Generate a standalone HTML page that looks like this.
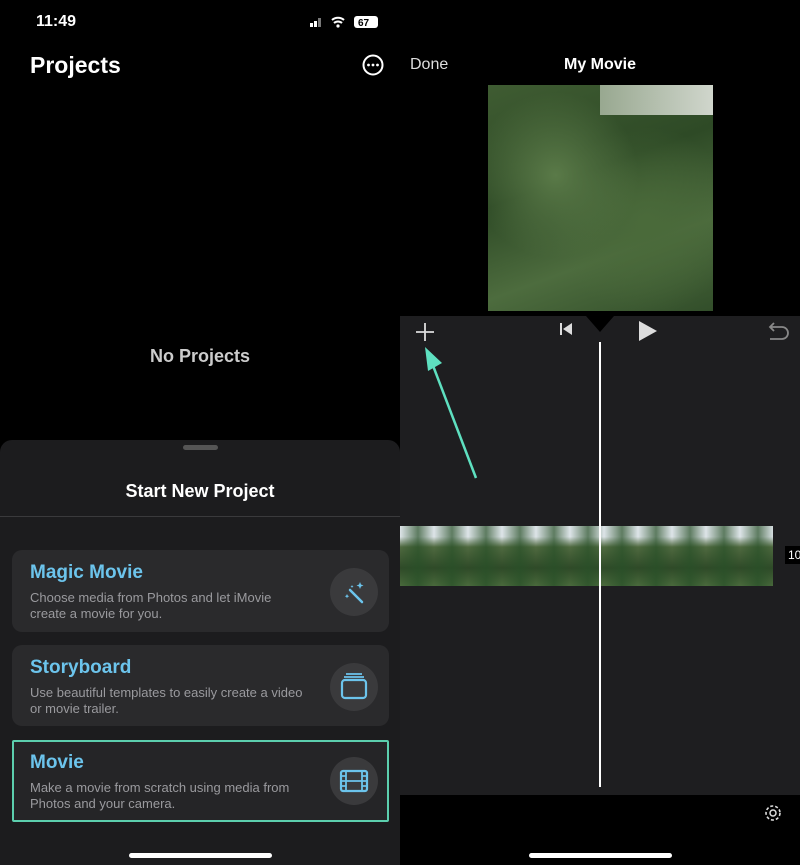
<!DOCTYPE html>
<html><head><style>
*{margin:0;padding:0;box-sizing:border-box}
body{width:800px;height:865px;background:#000;font-family:"Liberation Sans",sans-serif;position:relative;overflow:hidden;color:#fff}
.a{position:absolute}
.card{position:absolute;left:12px;width:377px;background:#2a2a2c;border-radius:10px}
.card h3{position:absolute;left:18px;top:12px;font-size:19px;color:#6cc4ec;font-weight:bold}
.card p{position:absolute;left:18px;top:40px;font-size:13px;line-height:16px;color:#9a9a9e;width:300px}
.ic{position:absolute;right:11px;top:18px;width:48px;height:48px;border-radius:50%;background:#3a3a3c}
</style></head><body>
<div class="a" style="left:36px;top:13px;font-size:16px;font-weight:bold">11:49</div>
<div class="a" style="left:308px;top:14px;font-size:12px">
<svg width="80" height="16"><rect x="2" y="9" width="3" height="4" fill="#fff"/><rect x="6" y="7" width="3" height="6" fill="#fff"/><rect x="10" y="4" width="3" height="9" fill="#777"/><path d="M24 6a9 9 0 0 1 12 0M26 9a6 6 0 0 1 8 0" stroke="#fff" stroke-width="2" fill="none"/><circle cx="30" cy="12" r="1.6" fill="#fff"/><rect x="46" y="2" width="24" height="12" rx="3" fill="#fff"/><text x="50" y="12" font-size="10" font-weight="bold" fill="#000" font-family="Liberation Sans">67</text></svg></div>
<div class="a" style="left:30px;top:52px;font-size:23px;font-weight:bold">Projects</div>
<svg class="a" style="left:362px;top:54px" width="22" height="22"><circle cx="11" cy="11" r="9.5" stroke="#fff" stroke-width="2" fill="none"/><circle cx="6.5" cy="11" r="1.4" fill="#fff"/><circle cx="11" cy="11" r="1.4" fill="#fff"/><circle cx="15.5" cy="11" r="1.4" fill="#fff"/></svg>
<div class="a" style="left:0;width:400px;top:346px;text-align:center;font-size:18px;font-weight:bold;color:#ccc">No Projects</div>
<div class="a" style="left:0;top:440px;width:400px;height:425px;background:#1c1c1e;border-radius:12px 12px 0 0"></div>
<div class="a" style="left:183px;top:445px;width:35px;height:5px;border-radius:3px;background:#555"></div>
<div class="a" style="left:0;width:400px;top:481px;text-align:center;font-size:18px;font-weight:bold">Start New Project</div>
<div class="a" style="left:0;top:516px;width:400px;height:1px;background:#3a3a3c"></div>
<div class="card" style="top:550px;height:82px"><h3>Magic Movie</h3><p style="width:270px">Choose media from Photos and let iMovie create a movie for you.</p><div class="ic"><svg width="48" height="48"><path d="M20 22l12 12" stroke="#6cc4ec" stroke-width="2.5" stroke-linecap="round"/><path d="M30 14l1 2.5 2.5 1-2.5 1-1 2.5-1-2.5-2.5-1 2.5-1z M17 26l.7 1.5 1.5.7-1.5.7-.7 1.5-.7-1.5-1.5-.7 1.5-.7z M22 17l.5 1 1 .5-1 .5-.5 1-.5-1-1-.5 1-.5z" fill="#6cc4ec"/></svg></div></div>
<div class="card" style="top:645px;height:81px"><h3>Storyboard</h3><p style="width:285px">Use beautiful templates to easily create a video or movie trailer.</p><div class="ic"><svg width="48" height="48"><rect x="12" y="17" width="24" height="18" rx="3" stroke="#6cc4ec" stroke-width="2.2" fill="none"/><path d="M14 14h20M16 11h16" stroke="#6cc4ec" stroke-width="1.8"/></svg></div></div>
<div class="card" style="top:740px;height:82px;background:#252527;border:2px solid #5ccfae;border-radius:2px"><h3 style="top:10px;left:16px">Movie</h3><p style="top:38px;left:16px;width:290px">Make a movie from scratch using media from Photos and your camera.</p><div class="ic" style="top:15px;right:9px"><svg width="48" height="48"><rect x="11" y="14" width="26" height="20" rx="2" stroke="#6cc4ec" stroke-width="2.2" fill="none"/><path d="M16 14v20M32 14v20M11 19h5M11 24h5M11 29h5M32 19h5M32 24h5M32 29h5M16 24h16" stroke="#6cc4ec" stroke-width="1.8"/></svg></div></div>
<div class="a" style="left:129px;top:853px;width:143px;height:5px;border-radius:3px;background:#fff"></div>

<div class="a" style="left:400px;top:0;width:400px;height:865px;background:#000"></div>
<div class="a" style="left:410px;top:56px;font-size:16px;color:#ddd">Done</div>
<div class="a" style="left:400px;width:400px;top:56px;text-align:center;font-size:16px;font-weight:bold">My Movie</div>
<div class="a" style="left:488px;top:85px;width:225px;height:226px;background:radial-gradient(circle at 30% 40%,#5a7a48,transparent 40%),radial-gradient(circle at 70% 60%,#4a6a3a,transparent 45%),linear-gradient(160deg,#3f5c32,#2e4a26 40%,#4d6c3e 70%,#324e2a)"></div>
<div class="a" style="left:600px;top:85px;width:113px;height:30px;background:linear-gradient(90deg,#98a890,#d0d6cc)"></div>
<div class="a" style="left:400px;top:316px;width:400px;height:479px;background:#1e1e20"></div>
<svg class="a" style="left:586px;top:316px" width="28" height="18"><path d="M0 0h28L14 16z" fill="#000"/></svg>
<svg class="a" style="left:414px;top:321px" width="22" height="22"><path d="M11 2v18M2 11h18" stroke="#ddd" stroke-width="1.8"/></svg>
<svg class="a" style="left:558px;top:322px" width="16" height="14"><rect x="2" y="1" width="2" height="12" fill="#ddd"/><path d="M14 1v12L5 7z" fill="#ddd"/></svg>
<svg class="a" style="left:636px;top:320px" width="22" height="22"><path d="M3 1v20l18-10z" fill="#ddd"/></svg>
<svg class="a" style="left:766px;top:321px" width="24" height="20"><path d="M5 6h11a6 6 0 0 1 0 12H4M8 2L4 6l4 4" stroke="#888" stroke-width="1.8" fill="none"/></svg>
<svg class="a" style="left:420px;top:345px" width="60" height="135"><path d="M56 133L12 18" stroke="#5ee0c0" stroke-width="2.5"/><path d="M5 2l3 24 14-8z" fill="#5ee0c0"/></svg>
<div class="a" style="left:400px;top:526px;width:373px;height:60px;background:linear-gradient(180deg,#dde4e8 0%,#dde4e8 18%,#506a40 35%,#2f4a28 70%,#4a6a3c 100%)"></div>
<div class="a" style="left:400px;top:526px;width:373px;height:60px;background:repeating-linear-gradient(90deg,rgba(60,90,50,.0) 0,rgba(40,80,40,.7) 18px,rgba(60,90,50,0) 34px)"></div>
<div class="a" style="left:785px;top:546px;font-size:12px;background:#000;padding:2px 3px">10</div>
<div class="a" style="left:599px;top:342px;width:2px;height:445px;background:#fff"></div>
<svg class="a" style="left:762px;top:802px" width="22" height="22"><circle cx="11" cy="11" r="7" stroke="#ddd" stroke-width="1.6" fill="none" stroke-dasharray="3 2"/><circle cx="11" cy="11" r="3" stroke="#ddd" stroke-width="1.5" fill="none"/></svg>
<div class="a" style="left:529px;top:853px;width:143px;height:5px;border-radius:3px;background:#fff"></div>
</body></html>
